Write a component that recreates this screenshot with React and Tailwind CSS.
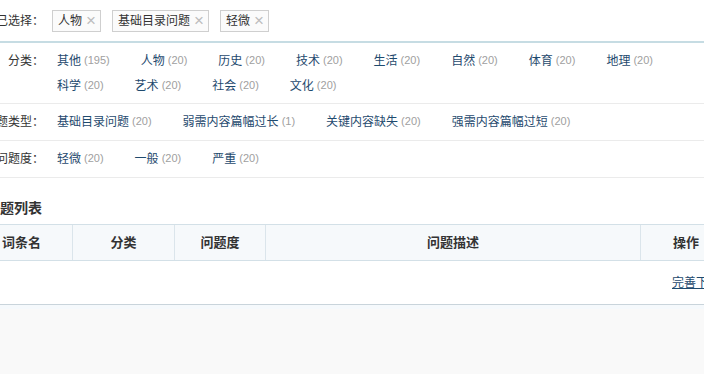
import React from 'react';

const selected = ['人物', '基础目录问题', '轻微'];

const filters = [
  {
    label: '分类：',
    items: [
      ['其他', 195], ['人物', 20], ['历史', 20], ['技术', 20], ['生活', 20], ['自然', 20],
      ['体育', 20], ['地理', 20], ['科学', 20], ['艺术', 20], ['社会', 20], ['文化', 20],
    ],
  },
  {
    label: '问题类型：',
    items: [['基础目录问题', 20], ['弱需内容篇幅过长', 1], ['关键内容缺失', 20], ['强需内容篇幅过短', 20]],
  },
  {
    label: '问题度：',
    items: [['轻微', 20], ['一般', 20], ['严重', 20]],
  },
];

const columns = [
  { label: '词条名', w: 'w-[102px]' },
  { label: '分类', w: 'w-[102px]' },
  { label: '问题度', w: 'w-[91px]' },
  { label: '问题描述', w: 'w-[375px]' },
  { label: '操作', w: 'w-[90px]' },
];

const Label = ({ children }) => (
  <div className="w-[44px] shrink-0 flex justify-end whitespace-nowrap text-[#333]">{children}</div>
);

export default function App() {
  return (
    <div className="w-[704px] h-[374px] overflow-hidden bg-[#f9f9f9] text-[12px] text-[#333] font-['Liberation_Sans','Noto_Sans_CJK_SC',sans-serif]">
      <div className="bg-white border-b border-[#c9d4db]">
        {/* 已选择 */}
        <div className="flex items-center h-[41px]">
          <Label>已选择：</Label>
          <div className="flex gap-[11px] ml-[8px]">
            {selected.map((s) => (
              <span
                key={s}
                className="flex items-center h-[22px] pl-[5px] pr-[4px] gap-[4px] border border-[#cfcfcf] bg-[#fbfbfb] leading-none"
              >
                <span>{s}</span>
                <span className="text-[#bdbdbd] text-[17px] font-light leading-none">×</span>
              </span>
            ))}
          </div>
        </div>
        <div className="h-[2px] bg-[#c6dce3]" />

        {/* 筛选条件 */}
        {filters.map((f, idx) => (
          <div
            key={f.label}
            className={`flex border-b border-[#ebebeb] pt-[5px] ${idx === 0 ? 'pb-[5px]' : 'pb-[6px]'}`}
          >
            <div className="h-[25px] flex items-center">
              <Label>{f.label}</Label>
            </div>
            <div className="flex flex-wrap ml-[13px]">
              {f.items.map(([name, count]) => (
                <span key={name} className="h-[25px] flex items-center mr-[31px] whitespace-nowrap">
                  <span className="text-[#1f4a6e]">{name}</span>
                  <span className="ml-[3px] text-[11px] text-[#a0a0a0]">({count})</span>
                </span>
              ))}
            </div>
          </div>
        ))}

        {/* 问题列表 */}
        <div className="pt-[21px] pb-[7px] -ml-[14px] text-[14px] font-bold leading-[18px] text-[#333]">问题列表</div>

        <div className="-ml-[29px] w-[760px]">
          <div className="flex h-[37px] bg-[#f6f9fb] border-t border-b border-[#d3e0e7]">
            {columns.map((c, i) => (
              <div
                key={c.label}
                className={`${c.w} shrink-0 flex items-center justify-center font-bold text-[13px] text-[#333] ${
                  i < columns.length - 1 ? 'border-r border-[#dbe5eb]' : ''
                }`}
              >
                {c.label}
              </div>
            ))}
          </div>
          <div className="flex h-[43px] items-center">
            <div className="w-[670px] shrink-0" />
            <div className="w-[90px] shrink-0 pl-[31px]">
              <a href="#" className="text-[#1f4a6e] underline whitespace-nowrap">完善下一条</a>
            </div>
          </div>
        </div>
      </div>
      <div className="h-[4px] bg-[#f5f9fc]" />
    </div>
  );
}
